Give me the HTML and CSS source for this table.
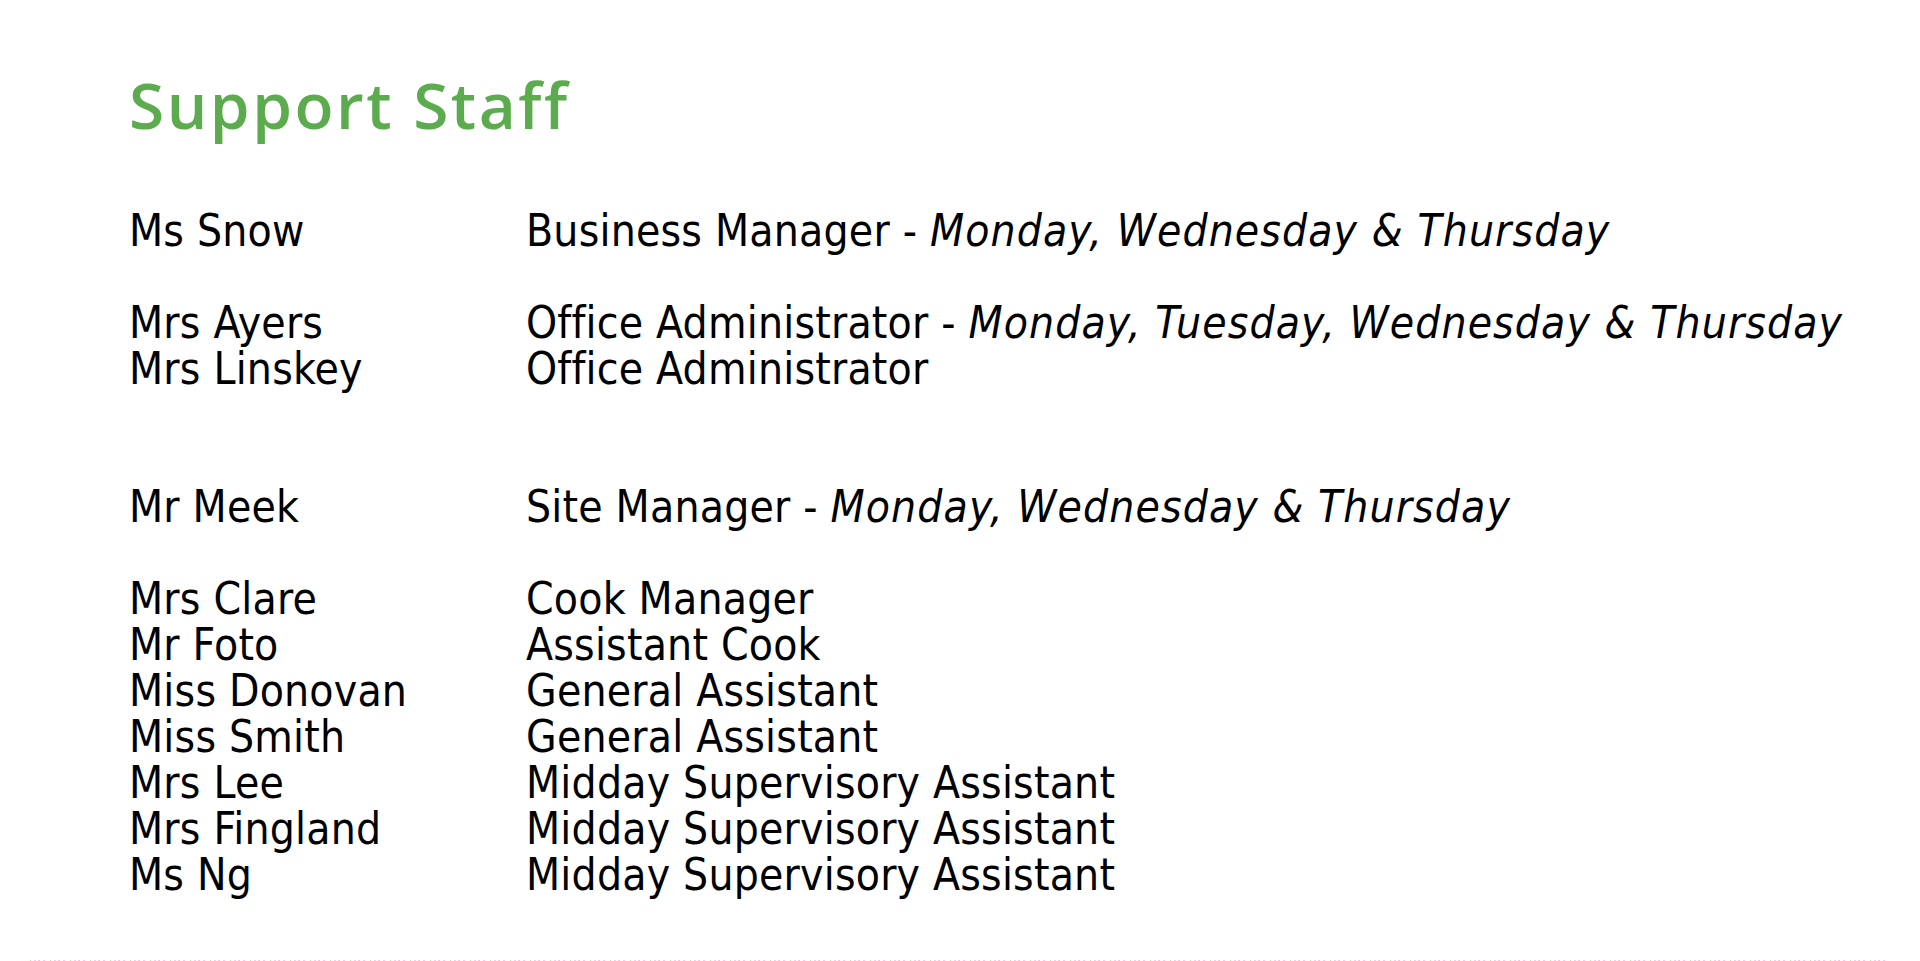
FILE: index.html
```html
<!DOCTYPE html>
<html lang="en">
<head>
<meta charset="utf-8">
<title>Support Staff</title>
<link rel="stylesheet" href="styles.css">
</head>
<body>
<main class="page">
  <h1 class="title">Support Staff</h1>
  <section class="staff">
    <div class="group">
      <div class="name">Ms Snow</div><div class="role">Business Manager - <em>Monday, Wednesday &amp; Thursday</em></div>
    </div>
    <div class="group">
      <div class="name">Mrs Ayers</div><div class="role">Office Administrator - <em>Monday, Tuesday, Wednesday &amp; Thursday</em></div>
      <div class="name">Mrs Linskey</div><div class="role">Office Administrator</div>
    </div>
    <div class="group group-wide">
      <div class="name">Mr Meek</div><div class="role">Site Manager - <em>Monday, Wednesday &amp; Thursday</em></div>
    </div>
    <div class="group">
      <div class="name">Mrs Clare</div><div class="role">Cook Manager</div>
      <div class="name">Mr Foto</div><div class="role">Assistant Cook</div>
      <div class="name">Miss Donovan</div><div class="role">General Assistant</div>
      <div class="name">Miss Smith</div><div class="role">General Assistant</div>
      <div class="name">Mrs Lee</div><div class="role">Midday Supervisory Assistant</div>
      <div class="name">Mrs Fingland</div><div class="role">Midday Supervisory Assistant</div>
      <div class="name">Ms Ng</div><div class="role">Midday Supervisory Assistant</div>
    </div>
  </section>
</main>
<div class="rule"></div>
</body>
</html>
```

FILE: styles.css
```css
html, body {
  margin: 0;
  padding: 0;
  background: #ffffff;
}

body {
  overflow: hidden;
}

.page {
  height: 960px;
  box-sizing: border-box;
  padding: 0 0 0 129px;
}

.title {
  margin: 0;
  padding-top: 65px;
  height: 80px;
  font-family: "Open Sans", "Noto Sans", sans-serif;
  font-weight: 600;
  font-size: 64px;
  line-height: 80px;
  color: #5cac4f;
  letter-spacing: 2.5px;
}

.staff {
  margin-top: 63px;
  font-family: "DejaVu Sans Condensed", "DejaVu Sans", sans-serif;
  font-stretch: condensed;
  font-size: 44px;
  line-height: 46px;
  letter-spacing: 0.2px;
  color: #000000;
}

.group {
  display: grid;
  grid-template-columns: 397px 1fr;
  margin-top: 46px;
}

.group:first-child {
  margin-top: 0;
}

.group-wide {
  margin-top: 92px;
}

.name,
.role {
  white-space: nowrap;
}

.role em {
  font-style: italic;
  letter-spacing: 1.1px;
}

.rule {
  height: 1px;
  margin: 0 30px;
  background: repeating-linear-gradient(90deg,
    #b8e8b0 0, #b8e8b0 1px,
    transparent 1px, transparent 4px,
    #ffc8f0 4px, #ffc8f0 6px,
    transparent 6px, transparent 8px,
    #ffc8f0 8px, #ffc8f0 9px,
    #b8e8b0 9px, #b8e8b0 10px,
    transparent 10px, transparent 13px,
    #ffc8f0 13px, #ffc8f0 15px,
    transparent 15px, transparent 20px);
}
```
